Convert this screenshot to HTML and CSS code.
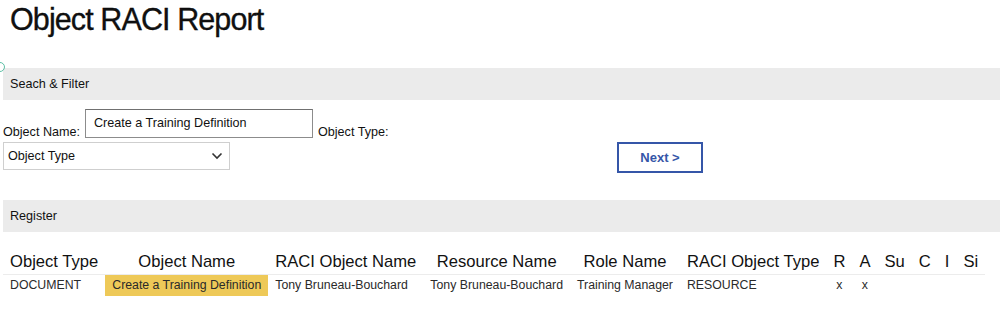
FILE: index.html
```html
<!DOCTYPE html>
<html lang="en">
<head>
    <meta charset="UTF-8">
    <meta name="viewport" content="width=device-width, initial-scale=1.0">
    <title>Object RACI Report</title>
    <link rel="stylesheet" href="styles.css">
</head>
<body>
    <div class="page">
        <h1 class="title">Object RACI Report</h1>

        <div class="section-bar">
            <span class="focus-dot"></span>
            Seach &amp; Filter
        </div>

        <div class="filter">
            <div class="filter-row">
                <label class="label" for="objectName">Object Name:</label>
                <div class="input">Create a Training Definition</div>
                <label class="label">Object Type:</label>
            </div>
            <div class="filter-row second">
                <div class="select">
                    <span>Object Type</span>
                    <svg width="12" height="8" viewBox="0 0 12 8" fill="none" stroke="#333" stroke-width="1.6">
                        <path d="M1.5 1.5l4.5 4.5 4.5-4.5"/>
                    </svg>
                </div>
                <button class="button">Next &gt;</button>
            </div>
        </div>

        <div class="section-bar">Register</div>

        <table class="report">
            <thead>
                <tr>
                    <th>Object Type</th>
                    <th>Object Name</th>
                    <th>RACI Object Name</th>
                    <th>Resource Name</th>
                    <th>Role Name</th>
                    <th>RACI Object Type</th>
                    <th>R</th>
                    <th>A</th>
                    <th>Su</th>
                    <th>C</th>
                    <th>I</th>
                    <th>Si</th>
                </tr>
            </thead>
            <tbody>
                <tr>
                    <td>DOCUMENT</td>
                    <td class="highlight">Create a Training Definition</td>
                    <td>Tony Bruneau-Bouchard</td>
                    <td>Tony Bruneau-Bouchard</td>
                    <td>Training Manager</td>
                    <td>RESOURCE</td>
                    <td class="mark">x</td>
                    <td class="mark">x</td>
                    <td></td>
                    <td></td>
                    <td></td>
                    <td></td>
                </tr>
            </tbody>
        </table>
    </div>
</body>
</html>
```

FILE: styles.css
```css
:root {
    --bar: #ebebeb;
    --blue: #3556a8;
    --yellow: #eec958;
    --text: #111111;
}

* {
    margin: 0;
    padding: 0;
    box-sizing: border-box;
    font-family: "Liberation Sans", Arial, sans-serif;
}

body {
    background: #ffffff;
    color: var(--text);
    overflow: hidden;
}

.page {
    padding: 0 0 0 3px;
}

.title {
    font-size: 30.5px;
    font-weight: normal;
    letter-spacing: -0.9px;
    -webkit-text-stroke: 0.3px #000;
    line-height: 36px;
    padding: 1px 0 0 7px;
    margin-bottom: 31px;
}

/* Section bars */
.section-bar {
    position: relative;
    background: var(--bar);
    height: 32px;
    line-height: 32px;
    padding-left: 7px;
    font-size: 12.6px;
}

.focus-dot {
    position: absolute;
    left: -8px;
    top: -6px;
    width: 10px;
    height: 10px;
    border: 1.5px solid #5cbfa5;
    border-radius: 50%;
}

/* Filter */
.filter {
    padding: 9px 0 27px;
}

.filter-row {
    display: flex;
    align-items: flex-end;
    gap: 5px;
}

.filter-row.second {
    align-items: flex-start;
    gap: 4px;
    margin-top: 4px;
}

.label {
    font-size: 12.6px;
    line-height: 14px;
    margin-bottom: -1px;
}

.input {
    width: 228px;
    height: 29px;
    border: 1px solid #8c8c8c;
    border-top-color: #707070;
    padding: 0 8px;
    font-size: 12.6px;
    line-height: 27px;
}

.select {
    width: 227px;
    height: 28px;
    border: 1px solid #cfcfcf;
    display: flex;
    align-items: center;
    justify-content: space-between;
    padding: 0 6px 0 4px;
    font-size: 12.6px;
}

.button {
    margin-left: 383px;
    width: 86px;
    height: 31px;
    background: #ffffff;
    border: 2px solid var(--blue);
    color: var(--blue);
    font-size: 13px;
    font-weight: bold;
    cursor: pointer;
}

/* Report table */
.report {
    border-collapse: collapse;
}

.report th {
    font-size: 16.6px;
    font-weight: normal;
    padding: 0 7px 2px;
    height: 42px;
    vertical-align: bottom;
    border-bottom: 1px solid #ececec;
    white-space: nowrap;
}

.report td {
    font-size: 12.3px;
    color: #2a2a2a;
    padding: 0 7px;
    height: 22px;
    white-space: nowrap;
}

.report td.highlight {
    background: var(--yellow);
}

.report td.mark {
    text-align: center;
}
```
